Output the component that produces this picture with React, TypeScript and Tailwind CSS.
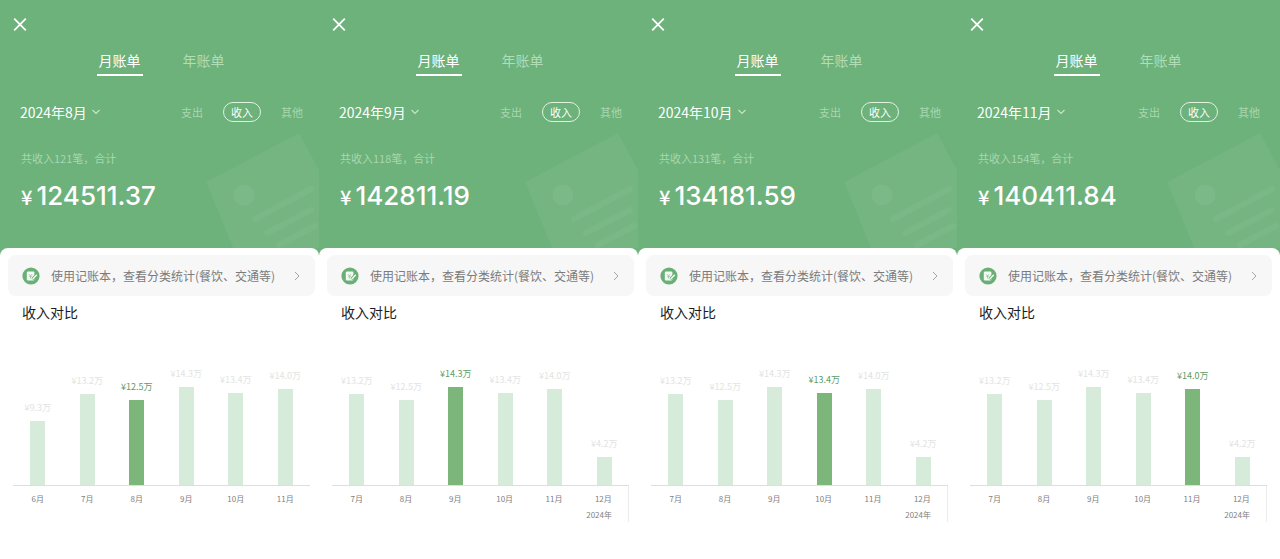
type Bar = { month: string; value: string; height: number };

type Bill = {
  date: string;
  count: number;
  total: string;
  active: string;
  bars: Bar[];
  yearMark: boolean;
};

const june: Bar = { month: "6月", value: "9.3", height: 64 };
const december: Bar = { month: "12月", value: "4.2", height: 28 };
const shared: Bar[] = [
  { month: "7月", value: "13.2", height: 91 },
  { month: "8月", value: "12.5", height: 85 },
  { month: "9月", value: "14.3", height: 98 },
  { month: "10月", value: "13.4", height: 92 },
  { month: "11月", value: "14.0", height: 96 },
];

const bills: Bill[] = [
  { date: "2024年8月", count: 121, total: "124511.37", active: "8月", bars: [june, ...shared], yearMark: false },
  { date: "2024年9月", count: 118, total: "142811.19", active: "9月", bars: [...shared, december], yearMark: true },
  { date: "2024年10月", count: 131, total: "134181.59", active: "10月", bars: [...shared, december], yearMark: true },
  { date: "2024年11月", count: 154, total: "140411.84", active: "11月", bars: [...shared, december], yearMark: true },
];

function ReceiptMark() {
  return (
    <svg viewBox="0 0 114 118" className="absolute right-0 bottom-0 h-[118px] w-[114px]" aria-hidden="true">
      <path d="M1 52 94 3 114 40V118H28Z" fill="#fff" fillOpacity="0.05" />
      <g fill="none" stroke="#fff" strokeOpacity="0.05" strokeWidth="6" strokeLinecap="round">
        <path d="M50 89 106 59M62 103 106 80M74 115 110 96" />
      </g>
      <circle cx="39" cy="65" r="10.5" fill="#fff" fillOpacity="0.06" />
    </svg>
  );
}

function LedgerIcon() {
  return (
    <svg viewBox="0 0 18 18" className="size-[18px] shrink-0" aria-hidden="true">
      <circle cx="9" cy="9" r="8.6" fill="#69af76" />
      <path
        d="M6 4.6H11.2Q12.4 4.6 12.4 5.8V12.2Q12.4 13.4 11.2 13.4H6Q4.8 13.4 4.8 12.2V5.8Q4.8 4.6 6 4.6Z"
        fill="#f4fbf5"
      />
      <path d="M7 7.2 8.5 9 10 7.2M8.5 9V11.4M7.2 9.4H9.8" fill="none" stroke="#8fc497" strokeWidth="0.8" />
      <path d="M10.4 12.2 15 7.4" stroke="#69af76" strokeWidth="3" />
      <path d="M11 11.8 14.4 8.2" stroke="#f4fbf5" strokeWidth="1.5" strokeLinecap="round" />
    </svg>
  );
}

function Header({ bill }: { bill: Bill }) {
  return (
    <header className="relative h-[248px] text-white">
      <ReceiptMark />
      <div className="relative max-w-[319px]">
        <div className="pt-[17px] pl-[13px]">
          <button type="button" aria-label="关闭" className="block">
            <svg viewBox="0 0 14 14" className="size-[14px]" fill="none" stroke="currentColor" strokeWidth="1.8">
              <path d="M1.2 1.7 12.8 13.3M12.8 1.7 1.2 13.3" />
            </svg>
          </button>
        </div>
        <nav className="mt-[19px] flex justify-center gap-[38px] pl-1 text-sm leading-5">
          <button type="button" className="h-[26px] border-b-2 border-white px-0.5 pb-1">
            月账单
          </button>
          <button type="button" className="h-[26px] px-0.5 pb-1.5 text-[#b1dcb6]">
            年账单
          </button>
        </nav>
        <div className="mt-[26px] flex h-5 items-center pr-4 pl-5">
          <button type="button" className="flex items-center gap-1 text-sm leading-5">
            {bill.date}
            <svg viewBox="0 0 10 6" className="h-1.5 w-2.5" fill="none" stroke="#c9e6cc" strokeWidth="1.1">
              <path d="M1.5 1 5 4.5 8.5 1" />
            </svg>
          </button>
          <div className="ml-auto flex items-center gap-5 text-[11px] leading-4 text-[#a8d8ae]">
            <button type="button">支出</button>
            <button type="button" className="h-5 rounded-full border border-[#e0f3e1] px-[7px] text-white">
              收入
            </button>
            <button type="button">其他</button>
          </div>
        </div>
        <p className="mt-7 pl-[21px] text-[11px] leading-4 text-[#a8d8ae]">共收入{bill.count}笔，合计</p>
        <p className="mt-3.5 flex items-baseline gap-1 pl-[21px] font-medium">
          <span className="text-xl leading-8">¥</span>
          <span className="font-['Inter',sans-serif] text-[26px] leading-8">{bill.total}</span>
        </p>
      </div>
    </header>
  );
}

function Chart({ bill }: { bill: Bill }) {
  return (
    <div className="ml-[13px] w-[297px]">
      <div className="grid h-[124px] grid-cols-6 items-end border-b border-[#dedede]">
        {bill.bars.map((bar) => {
          const active = bar.month === bill.active;
          return (
            <div key={bar.month} className="flex flex-col items-center">
              <span
                className={
                  active
                    ? "mb-[7px] text-[9px] leading-3 whitespace-nowrap text-[#5f9c66]"
                    : "mb-[7px] text-[9px] leading-3 whitespace-nowrap text-[#e2e4e2]"
                }
              >
                ¥{bar.value}万
              </span>
              <div className={active ? "w-[15px] bg-[#7db67b]" : "w-[15px] bg-[#d6ebd9]"} style={{ height: bar.height }} />
            </div>
          );
        })}
      </div>
      <div className={bill.yearMark ? "h-9 border-r border-[#ececec]" : "h-9"}>
        <div className="grid grid-cols-6 pt-[7px] text-center text-[8px] leading-3 text-[#808080]">
          {bill.bars.map((bar) => (
            <span key={bar.month}>{bar.month}</span>
          ))}
        </div>
        {bill.yearMark && <p className="mt-1 pr-4 text-right text-[8px] leading-3 text-[#808080]">2024年</p>}
      </div>
    </div>
  );
}

function Panel({ bill }: { bill: Bill }) {
  return (
    <section className="group min-w-0">
      <Header bill={bill} />
      <div className="rounded-t-[8px] bg-white pt-[7px] pr-1 pl-2 group-last:pr-2">
        <a href="#ledger" className="flex h-[41px] items-center rounded-lg bg-[#f7f7f7] pr-[15px] pl-3.5">
          <LedgerIcon />
          <span className="ml-[11px] text-xs whitespace-nowrap text-[#7b7b7b]">使用记账本，查看分类统计(餐饮、交通等)</span>
          <svg viewBox="0 0 6 10" className="ml-auto h-2.5 w-1.5" fill="none" stroke="#a5a5a5" strokeWidth="1">
            <path d="M1 1 5 5 1 9" />
          </svg>
        </a>
        <h2 className="mt-1.5 pl-3.5 text-sm leading-5 text-[#1c1c1c]">收入对比</h2>
      </div>
      <div className="bg-white pt-10">
        <Chart bill={bill} />
      </div>
    </section>
  );
}

export default function App() {
  return (
    <main className="min-h-screen bg-white font-['Noto_Sans_CJK_SC',sans-serif]">
      <div className="grid grid-cols-[319fr_319fr_319fr_323fr] bg-[linear-gradient(#6db17b_260px,#fff_260px)]">
        {bills.map((bill) => (
          <Panel key={bill.date} bill={bill} />
        ))}
      </div>
    </main>
  );
}
